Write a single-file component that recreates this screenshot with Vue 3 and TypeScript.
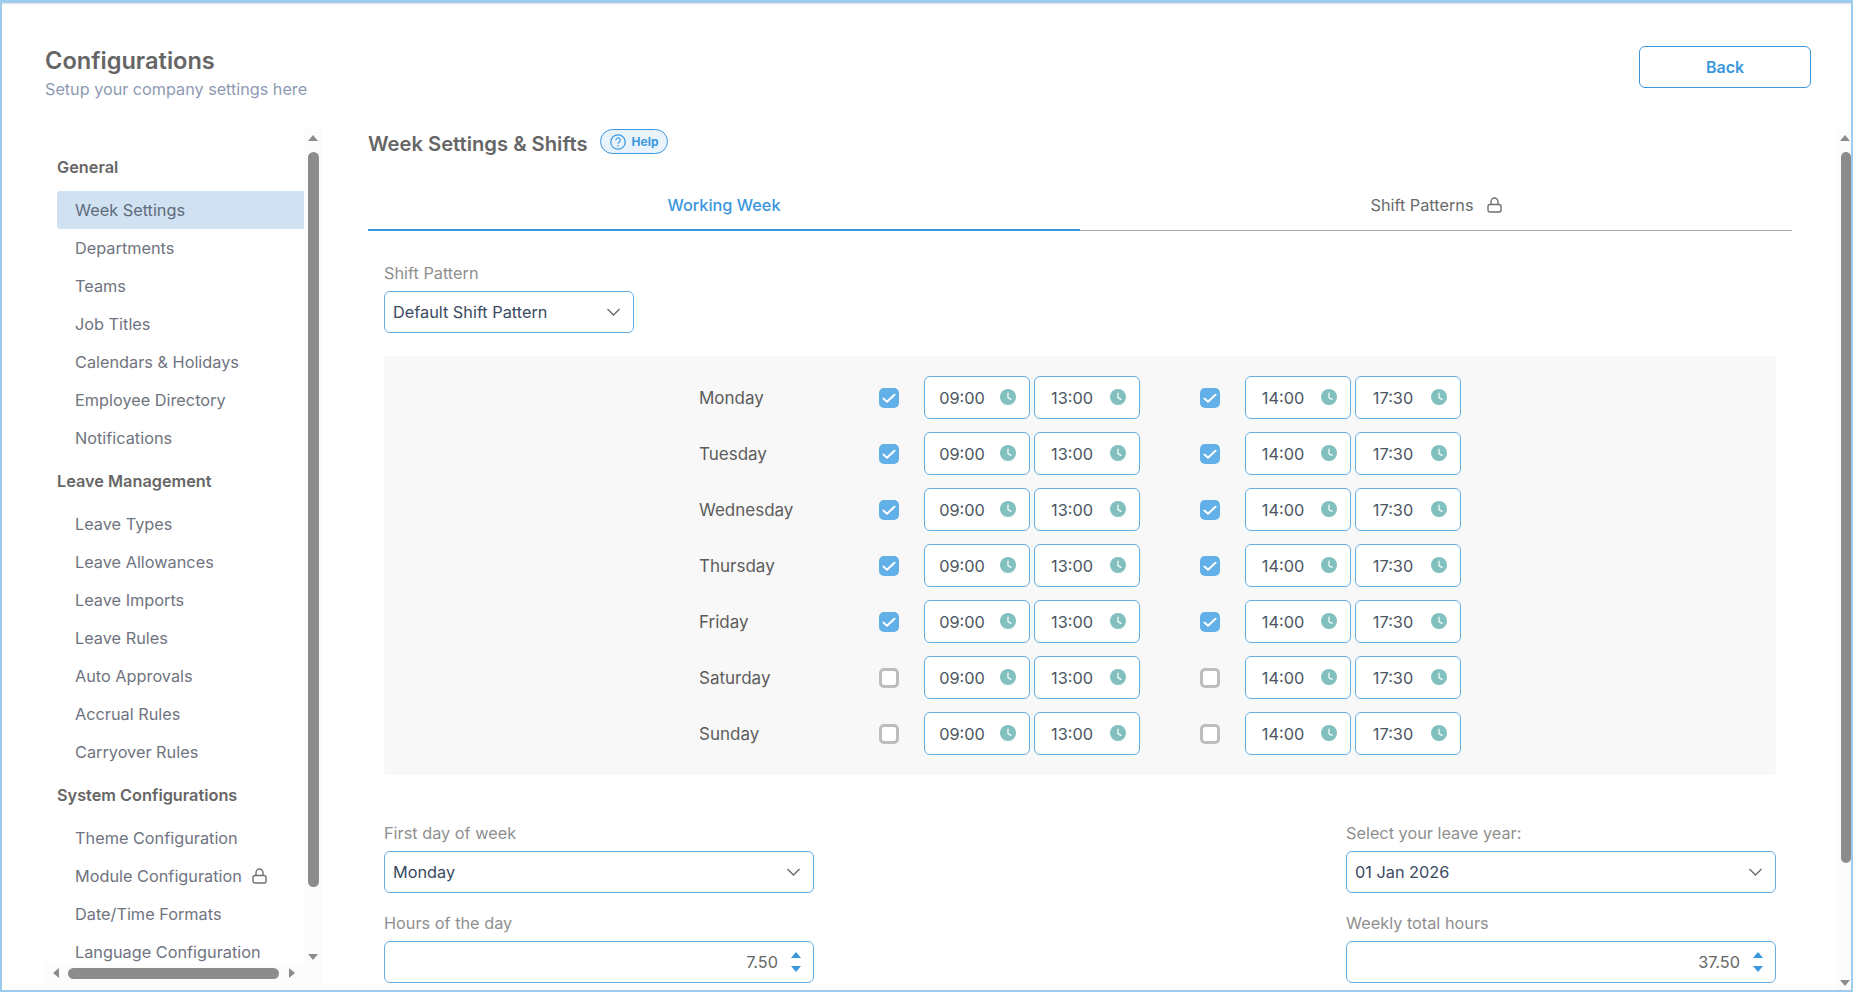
<script setup lang="ts">
const groups = [
  {
    title: 'General',
    items: ['Week Settings', 'Departments', 'Teams', 'Job Titles', 'Calendars & Holidays', 'Employee Directory', 'Notifications'],
  },
  {
    title: 'Leave Management',
    items: ['Leave Types', 'Leave Allowances', 'Leave Imports', 'Leave Rules', 'Auto Approvals', 'Accrual Rules', 'Carryover Rules'],
  },
  {
    title: 'System Configurations',
    items: ['Theme Configuration', 'Module Configuration', 'Date/Time Formats', 'Language Configuration'],
  },
]

const days = [
  { name: 'Monday', on: true },
  { name: 'Tuesday', on: true },
  { name: 'Wednesday', on: true },
  { name: 'Thursday', on: true },
  { name: 'Friday', on: true },
  { name: 'Saturday', on: false },
  { name: 'Sunday', on: false },
]
</script>

<template>
  <div class="window">
    <header class="page-head">
      <div>
        <h1>Configurations</h1>
        <p>Setup your company settings here</p>
      </div>
      <button class="back">Back</button>
    </header>

    <div class="body">
      <aside class="sidebar">
        <nav class="nav">
          <template v-for="group in groups" :key="group.title">
            <div class="group-title">{{ group.title }}</div>
            <a
              v-for="item in group.items"
              :key="item"
              class="nav-item"
              :class="{ active: item === 'Week Settings' }"
            >
              {{ item }}
              <svg v-if="item === 'Module Configuration'" class="lock" viewBox="0 0 15 16">
                <path d="M4 7.500V4.800a3.500 3.800 0 0 1 7 0v2.700" />
                <rect x="1" y="7.500" width="13" height="7.500" rx="2" />
              </svg>
            </a>
          </template>
        </nav>
        <div class="vbar">
          <i class="arrow up"></i>
          <i class="thumb side-thumb"></i>
          <i class="arrow down"></i>
        </div>
        <div class="hbar">
          <i class="arrow left"></i>
          <i class="hthumb"></i>
          <i class="arrow right"></i>
        </div>
      </aside>

      <main class="main">
        <div class="title-row">
          <h2>Week Settings &amp; Shifts</h2>
          <span class="help">
            <svg viewBox="0 0 16 16">
              <circle cx="8" cy="8" r="7.200" />
              <path d="M5.900 6.200a2.200 2.200 0 1 1 3.300 1.900c-.8.500-1.200.9-1.200 1.700" />
              <circle class="dot" cx="8" cy="12" r=".8" />
            </svg>
            Help
          </span>
        </div>

        <div class="tabs">
          <div class="tab current">Working Week</div>
          <div class="tab">
            Shift Patterns
            <svg class="lock" viewBox="0 0 15 16">
              <path d="M4 7.500V4.800a3.500 3.800 0 0 1 7 0v2.700" />
              <rect x="1" y="7.500" width="13" height="7.500" rx="2" />
            </svg>
          </div>
        </div>

        <div class="content">
          <div class="field pattern">
            <label>Shift Pattern</label>
            <div class="select">
              Default Shift Pattern
              <svg class="chevron" viewBox="0 0 14 8"><path d="M1 1l6 6 6-6" /></svg>
            </div>
          </div>

          <div class="panel">
            <div v-for="day in days" :key="day.name" class="day-row">
              <span class="day">{{ day.name }}</span>
              <span class="check" :class="{ on: day.on }">
                <svg v-if="day.on" viewBox="0 0 20 20"><path d="M4.500 10.500l3.500 3.200L15.500 6.800" /></svg>
              </span>
              <span v-for="time in ['09:00', '13:00']" :key="time" class="time">
                <span class="time-text">{{ time }}</span>
                <svg class="clock" viewBox="0 0 16 16">
                  <circle cx="8" cy="8" r="8" />
                  <path d="M8 4v4.800l3 1.600" />
                </svg>
              </span>
              <span class="check second" :class="{ on: day.on }">
                <svg v-if="day.on" viewBox="0 0 20 20"><path d="M4.500 10.500l3.500 3.200L15.500 6.800" /></svg>
              </span>
              <span v-for="time in ['14:00', '17:30']" :key="time" class="time">
                <span class="time-text">{{ time }}</span>
                <svg class="clock" viewBox="0 0 16 16">
                  <circle cx="8" cy="8" r="8" />
                  <path d="M8 4v4.800l3 1.600" />
                </svg>
              </span>
            </div>
          </div>

          <div class="settings">
            <div class="field">
              <label>First day of week</label>
              <div class="select">
                Monday
                <svg class="chevron" viewBox="0 0 14 8"><path d="M1 1l6 6 6-6" /></svg>
              </div>
            </div>
            <div class="field">
              <label>Select your leave year:</label>
              <div class="select">
                01 Jan 2026
                <svg class="chevron" viewBox="0 0 14 8"><path d="M1 1l6 6 6-6" /></svg>
              </div>
            </div>
            <div class="field">
              <label>Hours of the day</label>
              <div class="number">
                7.50
                <span class="spin"><i class="spin-up"></i><i class="spin-down"></i></span>
              </div>
            </div>
            <div class="field">
              <label>Weekly total hours</label>
              <div class="number">
                37.50
                <span class="spin"><i class="spin-up"></i><i class="spin-down"></i></span>
              </div>
            </div>
          </div>
        </div>

        <div class="vbar main-bar">
          <i class="arrow up"></i>
          <i class="thumb main-thumb"></i>
          <i class="arrow down"></i>
        </div>
      </main>
    </div>
  </div>
</template>

<style>
html,
body {
  margin: 0;
  background: #fff;
  overflow: hidden;
}
</style>

<style scoped>
.window {
  box-sizing: border-box;
  height: 992px;
  display: flex;
  flex-direction: column;
  overflow: hidden;
  background: #fff;
  border: 2px solid #9ccbec;
  border-top-width: 3px;
  box-shadow: inset 0 2px 2px -1px rgba(0, 0, 0, 0.12);
  font-family: Inter, 'Liberation Sans', sans-serif;
  font-size: 16.300px;
}

/* header */
.page-head {
  display: flex;
  justify-content: space-between;
  align-items: flex-start;
  flex: none;
  height: 126px;
  box-sizing: border-box;
  padding: 43px 40px 0 43px;
}

h1 {
  margin: 1px 0 5px;
  font-size: 23.600px;
  line-height: 27px;
  font-weight: 600;
  color: #666;
}

.page-head p {
  margin: 0;
  font-size: 16.200px;
  line-height: 20px;
  color: #8e9ab2;
}

.back {
  width: 172px;
  height: 42px;
  padding: 0;
  background: #fff;
  border: 1px solid #3b97dd;
  border-radius: 6px;
  color: #3b97dd;
  font: 600 16px Inter, sans-serif;
}

.body {
  flex: 1;
  display: flex;
  min-height: 0;
}

/* sidebar */
.sidebar {
  position: relative;
  flex: none;
  box-sizing: border-box;
  width: 277px;
  height: 854px;
  margin-left: 43px;
  overflow: hidden;
}

.nav {
  box-sizing: border-box;
  height: 835px;
  padding: 14px 18px 0 12px;
  overflow: hidden;
}

.group-title {
  height: 48px;
  line-height: 48px;
  font-weight: 600;
  color: #666;
}

.nav-item {
  display: flex;
  align-items: center;
  gap: 10px;
  height: 38px;
  padding-left: 18px;
  color: #6f7480;
  white-space: nowrap;
}

.nav-item.active {
  background: #d0e1f2;
  border-radius: 3px 0 0 3px;
  color: #5f6b7a;
}

.lock {
  width: 15px;
  height: 16px;
  flex: none;
  fill: none;
  stroke: #6f6f6f;
  stroke-width: 1.400;
}

/* fake scrollbars */
.vbar {
  position: absolute;
  top: 0;
  right: 0;
  bottom: 19px;
  width: 18px;
  background: #fcfcfc;
}

.thumb {
  position: absolute;
  left: 4px;
  width: 11px;
  background: #8c8c8c;
  border-radius: 6px;
}

.side-thumb {
  top: 23px;
  height: 735px;
}

.arrow {
  position: absolute;
  width: 0;
  height: 0;
  border: 5px solid transparent;
}

.arrow.up {
  top: 6px;
  left: 4px;
  border-top: 0;
  border-bottom: 6px solid #8c8c8c;
}

.arrow.down {
  bottom: 4px;
  left: 4px;
  border-bottom: 0;
  border-top: 6px solid #8c8c8c;
}

.arrow.left {
  left: 8px;
  top: 4px;
  border-left: 0;
  border-right: 6px solid #8c8c8c;
}

.arrow.right {
  left: 244px;
  top: 4px;
  border-right: 0;
  border-left: 6px solid #8c8c8c;
}

.hbar {
  position: absolute;
  left: 0;
  right: 0;
  bottom: 0;
  height: 19px;
  background: #fcfcfc;
}

.hthumb {
  position: absolute;
  left: 23px;
  top: 4px;
  width: 211px;
  height: 11px;
  background: #8c8c8c;
  border-radius: 6px;
}

/* main column */
.main {
  position: relative;
  flex: 1;
  min-width: 0;
  padding: 0 59px 0 46px;
  overflow: hidden;
}

.main-bar {
  width: 14px;
  bottom: 0;
}

.main-bar .arrow {
  left: 3px;
}

.main-thumb {
  top: 23px;
  left: 4px;
  height: 711px;
  width: 10px;
}

.title-row {
  display: flex;
  align-items: flex-start;
  gap: 12px;
}

h2 {
  margin: 3px 0 0;
  font-size: 20.200px;
  line-height: 24px;
  font-weight: 600;
  color: #666;
}

.help {
  display: flex;
  align-items: center;
  gap: 6px;
  box-sizing: border-box;
  height: 25px;
  width: 68px;
  padding-left: 9px;
  background: #e8f3fb;
  border: 1px solid #3b97dd;
  border-radius: 13px;
  color: #3b97dd;
  font-size: 12px;
  font-weight: 700;
}

.help svg {
  width: 16px;
  height: 16px;
  fill: none;
  stroke: #3b97dd;
  stroke-width: 1.200;
}

.help .dot {
  fill: #3b97dd;
  stroke: none;
}

.tabs {
  display: flex;
  margin-top: 22px;
}

.tab {
  flex: 1;
  display: flex;
  align-items: center;
  justify-content: center;
  gap: 13px;
  height: 53px;
  box-sizing: border-box;
  padding-top: 1px;
  border-bottom: 1px solid #a8a8a8;
  color: #6a6a6a;
}

.tab.current {
  padding-top: 2px;
  color: #3b97dd;
  font-weight: 500;
  border-bottom: 2px solid #3b97dd;
}

.content {
  padding: 32px 16px 0;
}

.field {
  display: flex;
  flex-direction: column;
  gap: 8px;
}

.field label {
  line-height: 20px;
  color: #8f8f8f;
}

.select,
.number {
  display: flex;
  align-items: center;
  box-sizing: border-box;
  height: 42px;
  background: #fff;
  border: 1px solid #63aee3;
  border-radius: 6px;
}

.select {
  justify-content: space-between;
  padding: 0 12px 0 8px;
  color: #3a4a5f;
}

.pattern .select {
  width: 250px;
}

.chevron {
  width: 15px;
  height: 8px;
  fill: none;
  stroke: #6f6a6a;
  stroke-width: 1.400;
}

.number {
  justify-content: flex-end;
  padding-right: 12px;
  color: #666;
}

.spin {
  display: flex;
  flex-direction: column;
  gap: 8px;
  margin-left: 13px;
}

.spin i {
  display: block;
  width: 0;
  height: 0;
  border-left: 5.500px solid transparent;
  border-right: 5.500px solid transparent;
}

.spin-up {
  border-bottom: 6px solid #3b97dd;
}

.spin-down {
  border-top: 6px solid #3b97dd;
}

.panel {
  margin-top: 23px;
  padding: 20px 0;
  background: #f8f8f8;
  border-radius: 3px;
  display: flex;
  flex-direction: column;
  align-items: center;
  gap: 13px;
}

.day-row {
  display: flex;
  align-items: center;
  height: 43px;
}

.day {
  width: 180px;
  font-size: 17px;
  color: #5c5c5c;
}

.check {
  box-sizing: border-box;
  width: 20px;
  height: 20px;
  margin-right: 25px;
  background: #fff;
  border: 3px solid #bdbdbd;
  border-radius: 5px;
}

.check.on {
  background: #62b0e8;
  border: 0;
}

.check.second {
  margin-left: 60px;
}

.check svg {
  display: block;
  width: 20px;
  height: 20px;
  fill: none;
  stroke: #fff;
  stroke-width: 2;
  stroke-linecap: round;
  stroke-linejoin: round;
}

.time {
  display: flex;
  align-items: center;
  justify-content: center;
  position: relative;
  box-sizing: border-box;
  width: 106px;
  height: 43px;
  padding-right: 30px;
  background: #fff;
  border: 1px solid #63aee3;
  border-radius: 6px;
  color: #4a5563;
}

.time + .time {
  margin-left: 4px;
}

.clock {
  position: absolute;
  right: 13px;
  top: 12px;
  width: 16px;
  height: 16px;
}

.clock circle {
  fill: #82c0bf;
}

.clock path {
  fill: none;
  stroke: #fff;
  stroke-width: 1.200;
  stroke-linecap: round;
  stroke-linejoin: round;
}

.settings {
  display: grid;
  grid-template-columns: 430px 430px;
  justify-content: space-between;
  row-gap: 20px;
  margin-top: 48px;
}
</style>
